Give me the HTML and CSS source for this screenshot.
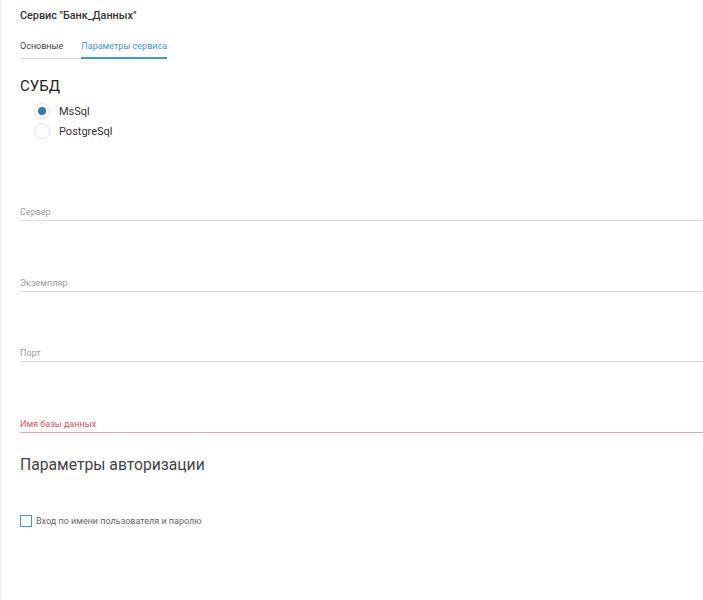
FILE: index.html
```html
<!DOCTYPE html>
<html lang="ru">
<head>
<meta charset="utf-8">
<title>Сервис</title>
<link rel="stylesheet" href="styles.css">
</head>
<body>
<div class="page">
  <h1 class="title">Сервис "Банк_Данных"</h1>
  <div class="tabs">
    <div class="tab">Основные</div>
    <div class="tab active">Параметры сервиса</div>
  </div>
  <h2 class="section">СУБД</h2>
  <div class="radios">
    <label class="radio"><span class="circle checked"></span><span>MsSql</span></label>
    <label class="radio"><span class="circle"></span><span>PostgreSql</span></label>
  </div>
  <div class="fields">
    <div class="field"><span class="flabel">Сервер</span></div>
    <div class="field"><span class="flabel">Экземпляр</span></div>
    <div class="field"><span class="flabel">Порт</span></div>
    <div class="field error"><span class="flabel">Имя базы данных</span></div>
  </div>
  <h2 class="subhead">Параметры авторизации</h2>
  <label class="check"><span class="box"></span><span>Вход по имени пользователя и паролю</span></label>
</div>
</body>
</html>
```
FILE: styles.css
```css
html, body {
  margin: 0;
  padding: 0;
  background: #fff;
  font-family: Roboto, "Noto Sans", sans-serif;
}
.page {
  border-left: 2px solid #f4f4f4;
  min-height: 600px;
  box-sizing: border-box;
  padding: 9px 0 0 18px;
}
.title {
  margin: 0;
  font-size: 10.8px;
  font-weight: 500;
  color: #333;
  line-height: 13px;
}
.tabs {
  display: flex;
  margin-top: 18px;
  width: 147px;
  border-bottom: 1px solid #d8d8d8;
}
.tab {
  font-size: 9px;
  color: #444;
  padding: 0 18px 0 0;
  height: 18px;
  line-height: 12px;
  white-space: nowrap;
}
.tab.active {
  color: #3a9ad3;
  padding: 0;
  border-bottom: 2px solid #3a9ad3;
  margin-bottom: -1px;
  height: 17px;
}
.section {
  margin: 18px 0 0;
  font-size: 15px;
  font-weight: 400;
  color: #222;
  line-height: 18px;
}
.radios {
  display: flex;
  flex-direction: column;
  gap: 4px;
  margin: 8px 0 0 14px;
}
.radio {
  display: flex;
  align-items: center;
  gap: 9px;
  font-size: 11px;
  color: #333;
  height: 16px;
}
.circle {
  width: 14px;
  height: 14px;
  border: 1px solid #e2e2e2;
  border-radius: 50%;
  box-sizing: content-box;
  display: flex;
  align-items: center;
  justify-content: center;
}
.circle.checked::after {
  content: "";
  width: 8px;
  height: 8px;
  border-radius: 50%;
  background: #3277b9;
}
.fields {
  display: flex;
  flex-direction: column;
  margin-top: 69px;
  gap: 57.7px;
}
.field {
  height: 12px;
  border-bottom: 1px solid #dcdcdc;
  font-size: 9px;
  color: #9a9a9a;
  line-height: 9px;
}
.field.error {
  color: #e0525a;
  border-bottom-color: #f2a3a3;
}
.subhead {
  margin: 22px 0 0;
  font-size: 15.7px;
  font-weight: 400;
  color: #444;
  line-height: 20px;
}
.check {
  display: flex;
  align-items: center;
  gap: 4px;
  margin-top: 40px;
  font-size: 9px;
  color: #666;
}
.box {
  width: 10px;
  height: 10px;
  border: 1px solid #3a9ad3;
  box-sizing: content-box;
}
```
